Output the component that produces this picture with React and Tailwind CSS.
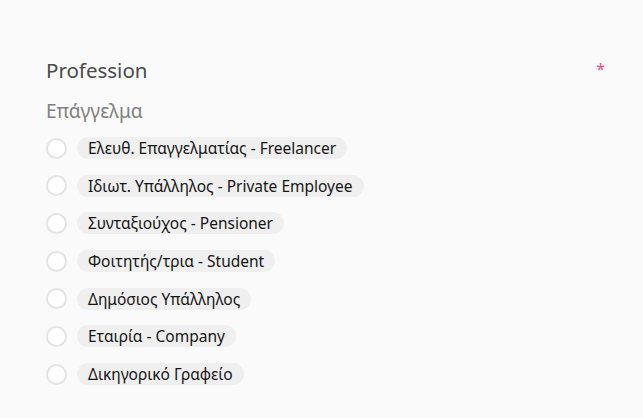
const options = [
  'Ελευθ. Επαγγελματίας - Freelancer',
  'Ιδιωτ. Υπάλληλος - Private Employee',
  'Συνταξιούχος - Pensioner',
  'Φοιτητής/τρια - Student',
  'Δημόσιος Υπάλληλος',
  'Εταιρία - Company',
  'Δικηγορικό Γραφείο',
];

export default function App() {
  return (
    <div
      className="min-h-[418px] w-full bg-[#fafafa] pl-[46px] pr-[38px] pt-[54px]"
      style={{ fontFamily: '"Noto Sans", "Open Sans", sans-serif' }}
    >
      <div className="flex items-start justify-between">
        <h2 className="text-[20.5px] leading-[32px] text-[#4a4a4a]">Profession</h2>
        <span className="mt-[7px] text-[16px] leading-[16px] text-[#ec4f86]">*</span>
      </div>
      <p className="mt-[12px] text-[19px] leading-[26px] text-[#808080]">Επάγγελμα</p>

      <div className="mt-[13px] flex flex-col gap-[15.7px]">
        {options.map((label) => (
          <label key={label} className="flex items-center gap-[10px]">
            <span className="h-[21px] w-[21px] shrink-0 rounded-full border-2 border-[#e3e3e3] bg-white" />
            <span className="rounded-full bg-[#efefef] px-[11px] text-[15.5px] leading-[22px] text-[#161616]">
              {label}
            </span>
          </label>
        ))}
      </div>
    </div>
  );
}
